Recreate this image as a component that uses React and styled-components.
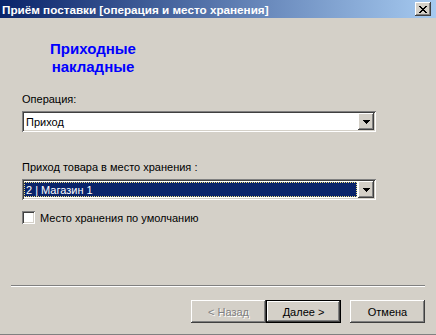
import React from 'react';
import styled, { createGlobalStyle } from 'styled-components';

const GlobalStyle = createGlobalStyle`
  html, body {
    margin: 0;
    padding: 0;
    background: #d4d0c8;
  }
  * {
    box-sizing: border-box;
  }
`;

const raised = `
  box-shadow: inset -1px -1px #404040, inset 1px 1px #ffffff,
    inset -2px -2px #808080, inset 2px 2px #d4d0c8;
`;

const sunken = `
  box-shadow: inset 1px 1px #808080, inset -1px -1px #ffffff,
    inset 2px 2px #404040, inset -2px -2px #d4d0c8;
`;

const Window = styled.div`
  width: 436px;
  height: 335px;
  display: flex;
  flex-direction: column;
  background: #d4d0c8;
  border-bottom: 1px solid #808080;
  font-family: Tahoma, 'Liberation Sans', Arial, sans-serif;
  font-size: 11px;
  color: #000;
`;

const TitleBar = styled.div`
  height: 18px;
  display: flex;
  align-items: center;
  justify-content: space-between;
  padding: 0 5px 0 2px;
  background: linear-gradient(to right, #0a246a, #a6caf0);
`;

const Title = styled.span`
  color: #fff;
  font-weight: bold;
  font-size: 11.7px;
  white-space: nowrap;
`;

const CloseButton = styled.div`
  width: 16px;
  height: 14px;
  display: flex;
  align-items: center;
  justify-content: center;
  background: #d4d0c8;
  ${raised}
`;

const Content = styled.div`
  flex: 1;
  display: flex;
  flex-direction: column;
  padding: 0 11px 11px;
`;

const Form = styled.div`
  display: flex;
  flex-direction: column;
  padding: 0 11px;
`;

const Heading = styled.div`
  width: 142px;
  margin-top: 22px;
  text-align: center;
  color: #0000ff;
  font-weight: bold;
  font-size: 15px;
  line-height: 18px;
`;

const Label = styled.div`
  margin-top: ${(p) => p.$top}px;
  height: 13px;
  line-height: 13px;
  white-space: nowrap;
`;

const Combo = styled.div`
  width: 354px;
  height: 21px;
  margin-top: ${(p) => p.$top}px;
  display: flex;
  align-items: stretch;
  padding: 2px;
  background: #fff;
  ${sunken}
`;

const ComboValue = styled.div`
  flex: 1;
  display: flex;
  align-items: center;
  padding-left: 2px;
  margin: ${(p) => (p.$selected ? '1px 1px 1px 0' : '0')};
  background: ${(p) => (p.$selected ? '#0a246a' : 'transparent')};
  color: ${(p) => (p.$selected ? '#fff' : '#000')};
  outline: ${(p) => (p.$selected ? '1px dotted #f0e080' : 'none')};
  outline-offset: -1px;
`;

const ArrowButton = styled.div`
  width: 16px;
  display: flex;
  align-items: center;
  justify-content: center;
  background: #d4d0c8;
  ${raised}
`;

const CheckRow = styled.label`
  display: flex;
  align-items: center;
  gap: 5px;
  margin-top: 11px;
`;

const CheckBox = styled.span`
  width: 13px;
  height: 13px;
  background: #fff;
  ${sunken}
`;

const Spacer = styled.div`
  flex: 1;
`;

const Separator = styled.div`
  height: 2px;
  border-top: 1px solid #808080;
  border-bottom: 1px solid #ffffff;
`;

const ButtonRow = styled.div`
  display: flex;
  justify-content: flex-end;
  margin-top: 13px;
`;

const Button = styled.div`
  width: 75px;
  height: 23px;
  margin-left: ${(p) => p.$gap || 0}px;
  display: flex;
  align-items: center;
  justify-content: center;
  background: #d4d0c8;
  color: ${(p) => (p.$disabled ? '#808080' : '#000')};
  text-shadow: ${(p) => (p.$disabled ? '1px 1px #ffffff' : 'none')};
  ${raised}
  ${(p) =>
    p.$default &&
    `
    border: 1px solid #000;
    box-shadow: inset -1px -1px #404040, inset 1px 1px #ffffff,
      inset -2px -2px #808080;
  `}
`;

const Arrow = () => (
  <svg width="7" height="4" viewBox="0 0 7 4">
    <path d="M0 0h7v1H0zM1 1h5v1H1zM2 2h3v1H2zM3 3h1v1H3z" fill="#000" />
  </svg>
);

const CloseGlyph = () => (
  <svg width="8" height="7" viewBox="0 0 8 7">
    <path
      d="M0 0h2v1H0zM6 0h2v1H6zM1 1h2v1H1zM5 1h2v1H5zM2 2h4v1H2zM3 3h2v1H3zM2 4h4v1H2zM1 5h2v1H1zM5 5h2v1H5zM0 6h2v1H0zM6 6h2v1H6z"
      fill="#000"
    />
  </svg>
);

export default function App() {
  return (
    <>
      <GlobalStyle />
      <Window>
        <TitleBar>
          <Title>Приём поставки [операция и место хранения]</Title>
          <CloseButton>
            <CloseGlyph />
          </CloseButton>
        </TitleBar>
        <Content>
          <Form>
            <Heading>
              Приходные
              <br />
              накладные
            </Heading>
            <Label $top={17}>Операция:</Label>
            <Combo $top={5}>
              <ComboValue>Приход</ComboValue>
              <ArrowButton>
                <Arrow />
              </ArrowButton>
            </Combo>
            <Label $top={29}>Приход товара в место хранения :</Label>
            <Combo $top={5}>
              <ComboValue $selected>2 | Магазин 1</ComboValue>
              <ArrowButton>
                <Arrow />
              </ArrowButton>
            </Combo>
            <CheckRow>
              <CheckBox />
              Место хранения по умолчанию
            </CheckRow>
          </Form>
          <Spacer />
          <Separator />
          <ButtonRow>
            <Button $disabled>&lt; Назад</Button>
            <Button $default>Далее &gt;</Button>
            <Button $gap={9}>Отмена</Button>
          </ButtonRow>
        </Content>
      </Window>
    </>
  );
}
